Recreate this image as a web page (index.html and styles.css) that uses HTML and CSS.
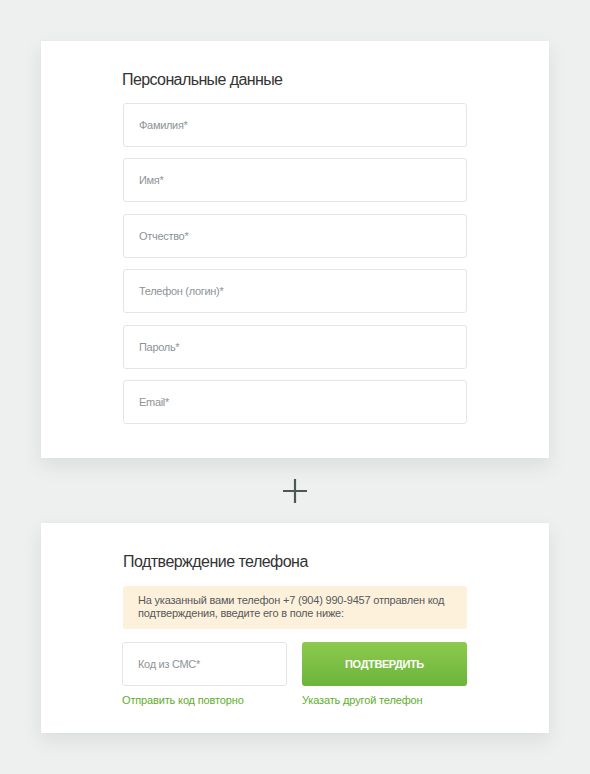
FILE: index.html
```html
<!DOCTYPE html>
<html lang="ru">
<head>
<meta charset="utf-8">
<link rel="stylesheet" href="styles.css">
</head>
<body>
<div class="page">
  <section class="card card-personal">
    <h2 class="title">Персональные данные</h2>
    <div class="fields">
      <div class="field">Фамилия*</div>
      <div class="field">Имя*</div>
      <div class="field">Отчество*</div>
      <div class="field">Телефон (логин)*</div>
      <div class="field">Пароль*</div>
      <div class="field">Email*</div>
    </div>
  </section>
  <div class="plus">
    <svg width="26" height="26" viewBox="0 0 26 26"><path d="M13 1V25M1 13H25" stroke="#4d5755" stroke-width="2.2" fill="none"/></svg>
  </div>
  <section class="card card-phone">
    <h2 class="title">Подтверждение телефона</h2>
    <div class="notice">На указанный вами телефон +7 (904) 990-9457 отправлен код подтверждения, введите его в поле ниже:</div>
    <div class="row">
      <div class="col">
        <div class="field">Код из СМС*</div>
        <a class="link">Отправить код повторно</a>
      </div>
      <div class="col">
        <div class="btn">ПОДТВЕРДИТЬ</div>
        <a class="link">Указать другой телефон</a>
      </div>
    </div>
  </section>
</div>
</body>
</html>
```
FILE: styles.css
```css
html, body {
  margin: 0;
  padding: 0;
}
body {
  background: #eef0f0;
  font-family: "Liberation Sans", Arial, sans-serif;
  width: 590px;
  height: 774px;
  overflow: hidden;
}
.page {
  padding: 41px 41px 0 41px;
}
.card {
  background: #fff;
  box-shadow: 0 8px 18px rgba(60, 70, 70, 0.10), 0 0 1px rgba(0,0,0,0.06);
  padding: 0 82px 0 81px;
}
.card-personal {
  height: 417px;
  box-sizing: border-box;
  padding-top: 29px;
}
.card-phone {
  height: 210px;
  box-sizing: border-box;
  padding-top: 29px;
  padding-left: 81px;
}
.title {
  margin: 0;
  font-weight: normal;
  font-size: 16px;
  line-height: 20px;
  letter-spacing: -0.6px;
  color: #333;
  height: 20px;
}
.card-personal .title {
  margin-bottom: 13px;
}
.card-phone .title {
  margin-bottom: 14px;
  margin-left: 1px;
  letter-spacing: -0.53px;
}
.fields {
  display: flex;
  flex-direction: column;
  gap: 11.4px;
  padding-left: 1px;
}
.field {
  height: 44px;
  box-sizing: border-box;
  border: 1px solid #e4e6e6;
  border-radius: 3px;
  padding-left: 15px;
  display: flex;
  align-items: center;
  font-size: 11px;
  letter-spacing: -0.3px;
  color: #8d9498;
  background: #fff;
}
.plus {
  height: 65px;
  display: flex;
  align-items: center;
  justify-content: center;
}
.plus svg {
  display: block;
}
.notice {
  background: #fdf1dc;
  border-radius: 3px;
  height: 43px;
  box-sizing: border-box;
  padding: 8px 15px 0 15px;
  font-size: 11px;
  letter-spacing: -0.2px;
  line-height: 13px;
  color: #555a5c;
  margin-bottom: 13px;
  margin-left: 1px;
}
.row {
  display: flex;
  gap: 15px;
}
.col {
  flex: 1;
  display: flex;
  flex-direction: column;
}
.btn {
  height: 44px;
  border-radius: 3px;
  background: linear-gradient(#8dca4d, #6cb43c);
  color: #fff;
  font-weight: bold;
  font-size: 11px;
  letter-spacing: -0.4px;
  display: flex;
  align-items: center;
  justify-content: center;
}
.link {
  margin-top: 7px;
  font-size: 11px;
  letter-spacing: -0.15px;
  line-height: 14px;
  color: #5eae2e;
  text-decoration: none;
}
```
